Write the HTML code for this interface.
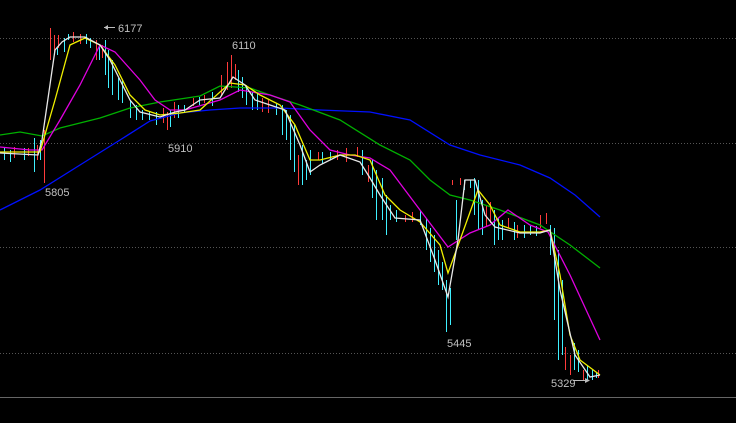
<!DOCTYPE html>
<html><head><meta charset="utf-8"><style>
html,body{margin:0;padding:0;background:#000;width:736px;height:423px;overflow:hidden}
svg{display:block}
text{font-family:"Liberation Sans",sans-serif;font-size:11px;fill:#c0c0c0}
</style></head><body>
<svg width="736" height="423" viewBox="0 0 736 423" xmlns="http://www.w3.org/2000/svg">
<g stroke="#555" stroke-width="1" stroke-dasharray="1,2">
<line x1="0" y1="38.5" x2="736" y2="38.5"/>
<line x1="0" y1="143.5" x2="736" y2="143.5"/>
<line x1="0" y1="247.5" x2="736" y2="247.5"/>
<line x1="0" y1="353.5" x2="736" y2="353.5"/>
</g>
<line x1="0" y1="397.5" x2="736" y2="397.5" stroke="#666"/>
<g transform="translate(0.5,0)">
<path fill="none" stroke="#ff3b3b" stroke-width="1" d="M14 147V158 M28 148V156 M37 145V160 M44 130V183 M50 28V60 M54 35V55 M58 35V48 M73 32V42 M80 34V44 M96 40V60 M102 45V58 M163 108V123 M167 112V130 M174 102V118 M193 98V106 M204 95V103 M221 75V95 M227 62V90 M231 55V88 M235 64V80 M262 98V112 M268 100V113 M298 155V185 M318 152V160 M337 150V160 M346 148V162 M357 147V157 M368 165V182 M405 215V222 M412 212V222 M452 180V185 M460 178V185 M486 205V226 M490 202V223 M508 218V228 M517 225V238 M540 215V228 M546 213V224 M565 347V370 M570 355V375 M583 370V380 M598 370V378"/>
<path fill="none" stroke="#3ff0ff" stroke-width="1" d="M4 148V160 M10 150V162 M24 148V160 M34 138V172 M40 140V160 M57 48V55 M64 38V52 M68 34V40 M86 34V44 M90 38V48 M99 44V60 M105 40V75 M108 50V88 M112 60V95 M118 78V100 M122 80V103 M130 100V118 M136 105V120 M142 110V120 M149 112V120 M156 112V125 M170 110V127 M178 105V118 M184 105V112 M199 97V105 M212 92V106 M238 70V92 M242 77V98 M246 85V105 M252 92V110 M257 93V110 M276 103V115 M282 105V135 M286 110V140 M290 115V160 M294 125V172 M302 145V185 M306 160V180 M310 150V175 M322 152V164 M330 152V160 M362 150V175 M372 160V198 M376 170V220 M382 178V220 M386 195V235 M390 205V220 M396 210V222 M420 210V225 M426 218V250 M430 228V262 M434 235V272 M438 250V285 M442 262V290 M446 280V332 M450 288V325 M456 200V240 M464 180V190 M470 180V188 M474 178V215 M478 180V230 M482 200V235 M494 210V245 M498 218V240 M502 220V240 M514 222V240 M524 225V238 M530 226V235 M536 226V236 M550 225V255 M554 228V320 M558 250V360 M562 280V355 M574 343V370 M578 350V372 M587 365V380 M592 370V380 M596 372V378"/>
</g>
<polyline fill="none" stroke="#0010ff" stroke-width="1.3" points="0,210 40,190 80,165 120,140 150,121 180,113 210,110 240,108 280,108 320,110 370,112 410,120 450,145 480,155 520,165 550,178 575,195 600,217"/>
<polyline fill="none" stroke="#00b000" stroke-width="1.3" points="0,135 20,132 42,136 60,128 100,118 130,108 160,102 200,96 220,86 250,88 270,95 300,105 340,120 380,145 410,160 430,180 450,195 470,200 500,210 540,225 570,245 600,268"/>
<polyline fill="none" stroke="#e000e0" stroke-width="1.3" points="0,147 30,150 42,150 60,120 80,85 100,45 115,52 140,80 155,100 170,110 185,110 220,100 240,90 270,95 290,102 310,130 330,150 350,155 370,158 390,170 420,210 448,247 470,233 490,225 508,210 530,225 548,232 570,275 600,340"/>
<polyline fill="none" stroke="#f0f000" stroke-width="1.3" points="0,152 20,152 40,152 55,100 70,45 85,38 100,45 115,65 130,95 145,110 160,115 180,113 200,110 230,83 245,85 260,95 280,105 295,125 310,160 320,160 340,155 355,155 370,160 385,195 400,210 420,222 440,245 448,273 460,240 478,190 490,205 500,225 520,232 540,232 550,230 560,275 570,335 580,360 600,375"/>
<polyline fill="none" stroke="#e8e8e8" stroke-width="1.3" points="0,153 38,155 42,140 55,50 62,42 70,37 85,37 100,45 110,60 120,80 130,100 140,112 160,117 175,112 185,110 200,100 220,98 233,77 245,85 255,100 270,105 285,110 300,145 310,172 320,165 340,155 360,162 370,178 380,195 395,218 420,220 435,260 448,297 458,240 465,180 475,180 485,215 495,227 520,233 540,233 550,230 560,290 575,355 590,377 600,375"/>
<line x1="104" y1="27.5" x2="115" y2="27.5" stroke="#bbb"/>
<path d="M104 27.5 L108 25 L108 30Z" fill="#bbb"/>
<line x1="573" y1="380.5" x2="588" y2="380.5" stroke="#bbb"/>
<path d="M590 380.5 L585 378 L585 383Z" fill="#bbb"/>
<text x="118" y="32">6177</text>
<text x="232" y="49">6110</text>
<text x="168" y="152">5910</text>
<text x="45" y="196">5805</text>
<text x="447" y="347">5445</text>
<text x="551" y="387">5329</text>
</svg>
</body></html>
